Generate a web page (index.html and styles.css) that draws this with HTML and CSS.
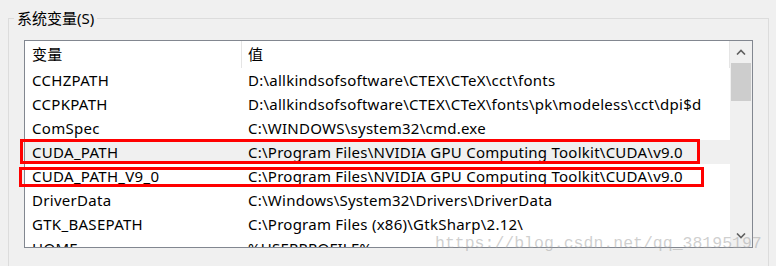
FILE: index.html
```html
<!DOCTYPE html>
<html lang="zh-CN">
<head>
<meta charset="UTF-8">
<title>系统变量</title>
<link rel="stylesheet" href="styles.css">
</head>
<body>
  <div class="group">
    <span class="group-title">系统变量(S)</span>
    <div class="listbox">
      <div class="list">
        <div class="list-header">
          <div class="col-name">变量</div>
          <div class="col-value">值</div>
        </div>
        <div class="row"><div class="col-name">CCHZPATH</div><div class="col-value">D:\allkindsofsoftware\CTEX\CTeX\cct\fonts</div></div>
        <div class="row"><div class="col-name">CCPKPATH</div><div class="col-value">D:\allkindsofsoftware\CTEX\CTeX\fonts\pk\modeless\cct\dpi$d</div></div>
        <div class="row"><div class="col-name">ComSpec</div><div class="col-value">C:\WINDOWS\system32\cmd.exe</div></div>
        <div class="row row-hover"><div class="col-name">CUDA_PATH</div><div class="col-value">C:\Program Files\NVIDIA GPU Computing Toolkit\CUDA\v9.0</div></div>
        <div class="row"><div class="col-name">CUDA_PATH_V9_0</div><div class="col-value">C:\Program Files\NVIDIA GPU Computing Toolkit\CUDA\v9.0</div></div>
        <div class="row"><div class="col-name">DriverData</div><div class="col-value">C:\Windows\System32\Drivers\DriverData</div></div>
        <div class="row"><div class="col-name">GTK_BASEPATH</div><div class="col-value">C:\Program Files (x86)\GtkSharp\2.12\</div></div>
        <div class="row"><div class="col-name">HOME</div><div class="col-value">%USERPROFILE%</div></div>
      </div>
      <div class="scrollbar">
        <div class="scroll-btn">
          <svg width="10" height="6" viewBox="0 0 10 6"><path d="M1 5.5 L5 1.5 L9 5.5" fill="none" stroke="#606060" stroke-width="1.6"/></svg>
        </div>
        <div class="scroll-thumb"></div>
        <div class="scroll-track"></div>
        <div class="scroll-btn">
          <svg width="10" height="6" viewBox="0 0 10 6"><path d="M1 0.5 L5 4.5 L9 0.5" fill="none" stroke="#606060" stroke-width="1.6"/></svg>
        </div>
      </div>
    </div>
  </div>

  <!-- annotations drawn over the screenshot -->
  <div class="mark mark-1"></div>
  <div class="mark mark-2"></div>
  <div class="watermark">https://blog.csdn.net/qq_38195197</div>
</body>
</html>
```

FILE: styles.css
```css
body {
  margin: 0;
  padding: 0;
  background-color: #f0f0f0;
  font-family: "Noto Sans", "Noto Sans CJK SC", sans-serif;
  font-size: 15px;
  color: #000;
  overflow: hidden;
}
.group {
  margin: 18px 0 0 8px;
  width: 759px;
  height: 260px;
  border: 1px solid #dcdcdc;
  border-bottom: none;
}
.group-title {
  display: inline-block;
  margin: -11px 0 0 5px;
  padding: 0 3px;
  height: 20px;
  line-height: 20px;
  background-color: #f0f0f0;
  vertical-align: top;
}
.listbox {
  display: flex;
  margin: 1px 0 0 15px;
  width: 727px;
  height: 206px;
  border: 1px solid #828790;
  background-color: #fff;
  overflow: hidden;
}
.list {
  width: 705px;
  overflow: hidden;
}
.list-header,
.row {
  display: flex;
  align-items: center;
}
.list-header {
  height: 27px;
}
.row {
  height: 24px;
}
.row-hover {
  background-color: #f0f0f0;
}
.col-name {
  width: 217px;
  padding-left: 7px;
  box-sizing: border-box;
  white-space: nowrap;
  letter-spacing: 0.3px;
}
.col-value {
  flex: 1;
  padding-left: 6px;
  white-space: nowrap;
  overflow: hidden;
  letter-spacing: 0.25px;
}
.list-header .col-name,
.list-header .col-value {
  height: 27px;
  line-height: 27px;
  border-right: 1px solid #e5e5e5;
}
.scrollbar {
  display: flex;
  flex-direction: column;
  width: 22px;
  background-color: #f0f0f0;
}
.scroll-btn {
  height: 22px;
  display: flex;
  align-items: center;
  justify-content: center;
}
.scroll-thumb {
  height: 38px;
  margin: 0 1px;
  background-color: #cdcdcd;
}
.scroll-track {
  flex: 1;
}
.mark {
  position: absolute;
  border: 3px solid #f00;
  box-sizing: border-box;
}
.mark-1 {
  left: 20px;
  top: 139px;
  width: 680px;
  height: 25px;
}
.mark-2 {
  left: 19px;
  top: 167px;
  width: 685px;
  height: 20px;
}
.watermark {
  position: absolute;
  left: 435px;
  top: 234px;
  font-family: "Liberation Mono", monospace;
  font-size: 16.5px;
  color: rgba(160, 160, 160, 0.5);
  white-space: nowrap;
}
```
